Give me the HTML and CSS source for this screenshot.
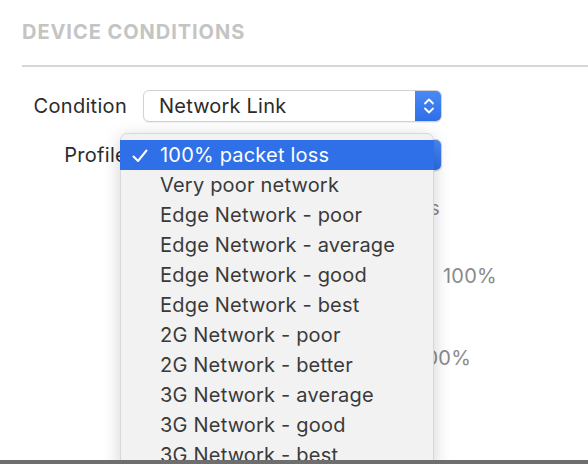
FILE: index.html
```html
<!DOCTYPE html>
<html>
<head>
<meta charset="utf-8">
<link rel="stylesheet" href="styles.css">
</head>
<body>
<div class="panel">
  <h2 class="title">DEVICE CONDITIONS</h2>
  <div class="divider"></div>
  <div class="form">
    <div class="row">
      <span class="label">Condition</span>
      <div class="select">
        <span class="value">Network Link</span>
        <span class="stepper">
          <svg width="12" height="18" viewBox="0 0 12 18"><path d="M2 6.5 L6 2.5 L10 6.5 M2 11.5 L6 15.5 L10 11.5" fill="none" stroke="#fff" stroke-width="1.8" stroke-linecap="round" stroke-linejoin="round"/></svg>
        </span>
      </div>
    </div>
    <div class="row">
      <span class="label">Profile</span>
      <div class="select">
        <span class="value">100% packet loss</span>
        <span class="stepper">
          <svg width="12" height="18" viewBox="0 0 12 18"><path d="M2 6.5 L6 2.5 L10 6.5 M2 11.5 L6 15.5 L10 11.5" fill="none" stroke="#fff" stroke-width="1.8" stroke-linecap="round" stroke-linejoin="round"/></svg>
        </span>
      </div>
    </div>
    <div class="info info-a">Downlink bandwidth 0 bps</div>
    <div class="info info-b">100%</div>
    <div class="info info-c">Uplink packets dropped 100%</div>
  </div>
</div>

<div class="menu">
  <div class="item selected">
    <svg class="check" width="16" height="14" viewBox="0 0 16 14"><path d="M1.5 7.5 L6 12 L14.5 1.5" fill="none" stroke="#fff" stroke-width="2" stroke-linecap="round" stroke-linejoin="round"/></svg>100% packet loss</div>
  <div class="item">Very poor network</div>
  <div class="item">Edge Network - poor</div>
  <div class="item">Edge Network - average</div>
  <div class="item">Edge Network - good</div>
  <div class="item">Edge Network - best</div>
  <div class="item">2G Network - poor</div>
  <div class="item">2G Network - better</div>
  <div class="item">3G Network - average</div>
  <div class="item">3G Network - good</div>
  <div class="item">3G Network - best</div>
</div>

<div class="bottom-bar"></div>
</body>
</html>
```

FILE: styles.css
```css
html, body {
  margin: 0;
  padding: 0;
  background: #ffffff;
  width: 588px;
  height: 464px;
  overflow: hidden;
  font-family: Inter, "Open Sans", "Liberation Sans", sans-serif;
}

.panel {
  padding: 19px 0 0 22px;
}

.title {
  margin: 0;
  font-size: 20px;
  font-weight: 700;
  color: #c4c4c4;
  letter-spacing: 0.95px;
  line-height: 26px;
}

.divider {
  margin-top: 20px;
  height: 2px;
  background: #d6d6d6;
}

.form {
  padding-top: 23px;
  display: flex;
  flex-direction: column;
  gap: 17px;
}

.row {
  display: flex;
  align-items: center;
  height: 32px;
}

.label {
  width: 105px;
  margin-right: 16px;
  text-align: right;
  font-size: 20px;
  letter-spacing: 0.3px;
  color: #2b2b2b;
}

.select {
  display: flex;
  align-items: stretch;
  width: 299px;
  height: 32px;
  box-sizing: border-box;
  border: 1px solid #d2d2d2;
  border-radius: 6px;
  background: #fff;
  box-shadow: 0 1px 1px rgba(0,0,0,0.06);
  overflow: hidden;
}

.value {
  flex: 1;
  display: flex;
  align-items: center;
  padding-left: 15px;
  font-size: 20px;
  letter-spacing: 0.2px;
  color: #2b2b2b;
}

.stepper {
  width: 27px;
  background: linear-gradient(#4a8af6, #2e6de6);
  display: flex;
  align-items: center;
  justify-content: center;
  margin: -1px -1px -1px 0;
}

.info {
  font-size: 20px;
  letter-spacing: 0.2px;
  color: #8a8a8a;
  white-space: nowrap;
}

.info-a {
  margin-top: 8px;
  width: 418px;
  text-align: right;
}

.info-b {
  margin-top: 27px;
  padding-left: 421px;
}

.info-c {
  margin-top: 41px;
  width: 449px;
  text-align: right;
}

.menu {
  position: absolute;
  left: 120px;
  top: 133px;
  width: 314px;
  height: 340px;
  box-sizing: border-box;
  background: #f2f2f2;
  border: 1px solid #d8d8d8;
  border-radius: 7px;
  padding-top: 6px;
  box-shadow: 0 4px 18px rgba(0,0,0,0.18);
}

.item {
  position: relative;
  height: 30px;
  line-height: 30px;
  padding-left: 39px;
  font-size: 20px;
  letter-spacing: 0.2px;
  color: #3a3a3a;
  white-space: nowrap;
}

.item.selected {
  background: #2f6fe8;
  color: #ffffff;
  margin: 0 -1px;
  padding-left: 40px;
}

.check {
  position: absolute;
  left: 12px;
  top: 9px;
}

.bottom-bar {
  position: absolute;
  left: 0;
  bottom: 0;
  width: 588px;
  height: 4px;
  background: #6e6e6e;
}
```
